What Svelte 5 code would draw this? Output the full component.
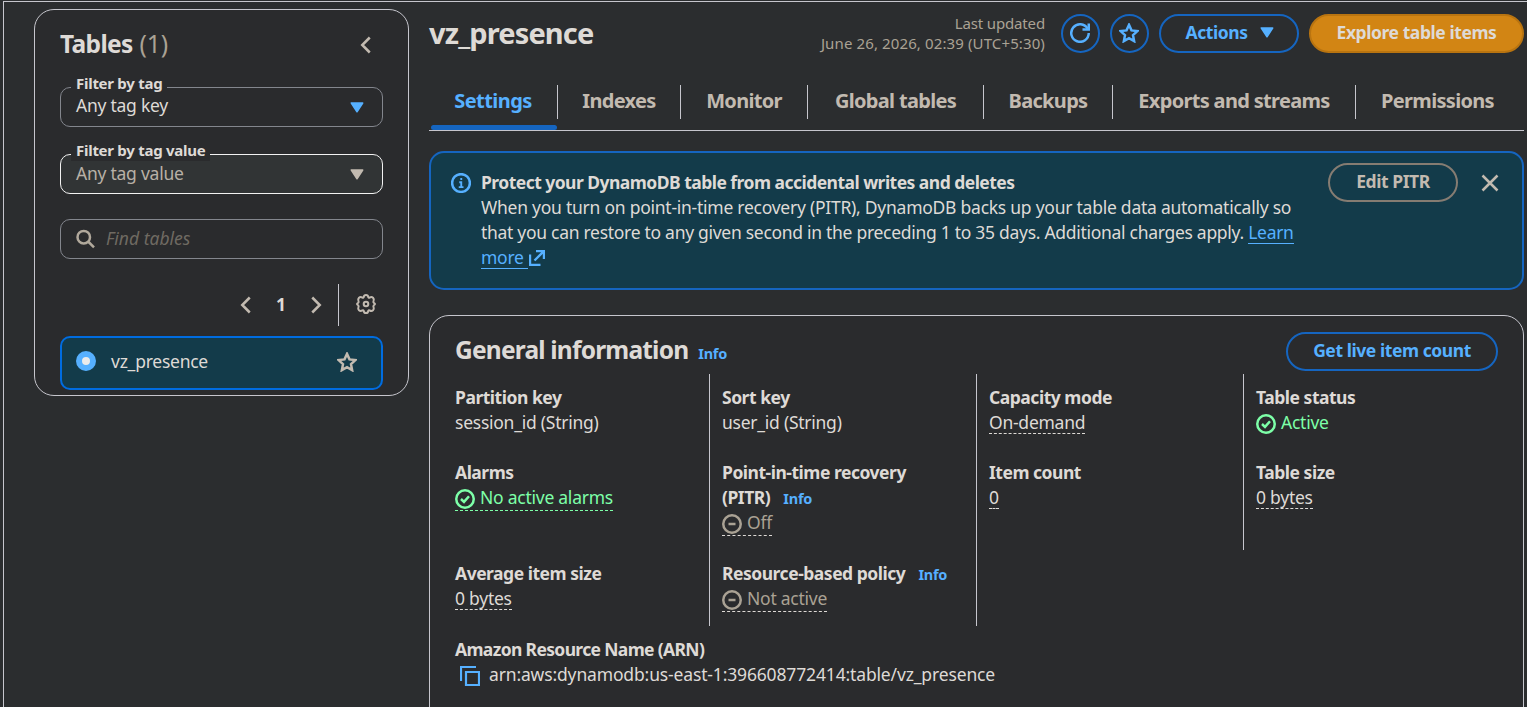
<script lang="ts">
  type Field = {
    label: string;
    value: string;
    status?: 'ok' | 'off';
    dashed?: boolean;
    info?: boolean;
  };

  const tabs = [
    { id: 'settings', name: 'Settings' },
    { id: 'indexes', name: 'Indexes' },
    { id: 'monitor', name: 'Monitor' },
    { id: 'global', name: 'Global tables' },
    { id: 'backups', name: 'Backups' },
    { id: 'exports', name: 'Exports and streams' },
    { id: 'permissions', name: 'Permissions' },
  ];

  // null keeps the column divider, undefined leaves the cell blank
  const fields: (Field | null | undefined)[] = [
    { label: 'Partition key', value: 'session_id (String)' },
    { label: 'Sort key', value: 'user_id (String)' },
    { label: 'Capacity mode', value: 'On-demand', dashed: true },
    { label: 'Table status', value: 'Active', status: 'ok' },
    { label: 'Alarms', value: 'No active alarms', status: 'ok', dashed: true },
    { label: 'Point-in-time recovery\n(PITR)', value: 'Off', status: 'off', dashed: true, info: true },
    { label: 'Item count', value: '0', dashed: true },
    { label: 'Table size', value: '0 bytes', dashed: true },
    { label: 'Average item size', value: '0 bytes', dashed: true },
    { label: 'Resource-based policy', value: 'Not active', status: 'off', dashed: true, info: true },
    null,
    undefined,
  ];

  let activeTab = $state('settings');
  let showAlert = $state(true);
</script>

{#snippet star()}
  <svg class="icon" viewBox="0 0 16 16"><path d="m8 1.500 2 4.400 4.700.6-3.500 3.200.9 4.800L8 12.100l-4.100 2.400.9-4.800L1.300 6.500 6 5.900 8 1.500Z" /></svg>
{/snippet}

{#snippet caret()}
  <svg class="caret" width="14" height="11" viewBox="0 0 14 11"><path d="M1.300 1h11.400L7 9.800Z" /></svg>
{/snippet}

{#snippet chevron(dir: string)}
  <svg class="icon" viewBox="0 0 16 16"><path d={dir === 'left' ? 'M11 2 5 8l6 6' : 'M5 2l6 6-6 6'} /></svg>
{/snippet}

<div class="page">
  <aside class="tables">
    <header class="tables-header">
      <h2>Tables <span class="counter">(1)</span></h2>
      <button class="plain" aria-label="Collapse">{@render chevron('left')}</button>
    </header>

    <div class="select">
      <span class="select-label">Filter by tag</span>
      <span class="select-value">Any tag key</span>
      {@render caret()}
    </div>
    <div class="select disabled">
      <span class="select-label">Filter by tag value</span>
      <span class="select-value">Any tag value</span>
      {@render caret()}
    </div>

    <div class="search">
      <svg class="icon" viewBox="0 0 16 16"><circle cx="6.200" cy="6.500" r="5" /><path d="m9.900 10.200 4.500 4.500" /></svg>
      <span>Find tables</span>
    </div>

    <div class="pager">
      <button class="plain" aria-label="Previous page">{@render chevron('left')}</button>
      <span class="page-number">1</span>
      <button class="plain" aria-label="Next page">{@render chevron('right')}</button>
      <span class="pager-divider"></span>
      <button class="plain" aria-label="Preferences">
        <svg class="icon gear" viewBox="0 0 20 20">
          <path d="M7.900 2.600Q8 1 10 1t2.100 1.600q.2 1.500 1.600.9 2-.9 3.300.2 1.300 1.400.6 3-.7 1.500.3 2.200 1.100.5 1.100 1.100t-1.100 1.200q-1 .7-.3 2.100.7 1.600-.6 3-1.300 1.100-3.300.2-1.400-.6-1.600.9Q12 19 10 19t-2.100-1.600q-.2-1.500-1.600-.9-2 .9-3.300-.2-1.300-1.400-.6-3 .7-1.400-.3-2.100Q1 10.600 1 10t1.100-1.100q1-.7.300-2.200-.7-1.600.6-3 1.300-1.100 3.300-.2 1.400.6 1.600-.9Z" />
          <circle cx="10" cy="10" r="2.300" />
        </svg>
      </button>
    </div>

    <div class="table-item">
      <span class="radio"></span>
      <span class="table-name">vz_presence</span>
      {@render star()}
    </div>
  </aside>

  <main>
    <header class="title-row">
      <h1>vz_presence</h1>
      <div class="updated">
        <div>Last updated</div>
        <div class="updated-time">June 26, 2026, 02:39 (UTC+5:30)</div>
      </div>
      <button class="btn round" aria-label="Refresh">
        <svg class="icon" viewBox="0 0 16 16"><path d="M10 5.200h5V.400" /><path d="M15 8a7 7 0 1 1-.9-3.400" /></svg>
      </button>
      <button class="btn round" aria-label="Favorite">{@render star()}</button>
      <button class="btn actions">Actions {@render caret()}</button>
      <button class="btn primary">Explore table items</button>
    </header>

    <nav class="tabs">
      {#each tabs as tab}
        <button class="tab" class:active={tab.id === activeTab} onclick={() => (activeTab = tab.id)}>
          <span>{tab.name}</span>
        </button>
      {/each}
    </nav>

    {#if showAlert}
      <section class="alert">
        <svg class="icon alert-icon" viewBox="0 0 16 16">
          <circle cx="8" cy="8" r="7.100" />
          <path class="thin" d="M8.200 3.900v1.700M6.600 7.400h1.600V11M6.200 11.300H10" />
        </svg>
        <div class="alert-body">
          <strong>Protect your DynamoDB table from accidental writes and deletes</strong>
          <p>
            When you turn on point-in-time recovery (PITR), DynamoDB backs up your table data automatically so<br />
            <span class="tight">that you can restore to any given second in the preceding 1 to 35 days. Additional charges apply. <a href="#pitr">Learn</a></span><br />
            <a href="#pitr">more&nbsp;</a>
            <svg class="external" viewBox="0 0 16 16"><path d="M1 4.500V15h10.500M7 1h8v8M15 1 5.500 10.500" /></svg>
          </p>
        </div>
        <button class="btn neutral">Edit PITR</button>
        <button class="plain dismiss" aria-label="Dismiss" onclick={() => (showAlert = false)}>
          <svg class="icon" viewBox="0 0 16 16"><path d="m2 2 12 12M14 2 2 14" /></svg>
        </button>
      </section>
    {/if}

    <section class="card">
      <header class="card-header">
        <h2>General information</h2>
        <span class="info">Info</span>
        <button class="btn live">Get live item count</button>
      </header>

      <div class="grid">
        {#each fields as field}
          <div class="cell" class:blank={field === undefined}>
            {#if field}
              {@const lines = field.label.split('\n')}
              {#each lines as line, i}
                <div class="label">
                  <span>{line}</span>
                  {#if field.info && i === lines.length - 1}<span class="info">Info</span>{/if}
                </div>
              {/each}
              <div class="value">
                <span class={field.status} class:dashed={field.dashed}>
                  {#if field.status}
                    <svg class="icon" viewBox="0 0 16 16">
                      <circle cx="8" cy="8" r="7" />
                      <path d={field.status === 'ok' ? 'm4.800 8 2.400 2.300 4-4.500' : 'M5.200 8h5.600'} />
                    </svg>
                  {/if}{field.value}</span>
              </div>
            {/if}
          </div>
        {/each}
      </div>

      <div class="arn">
        <div class="label">Amazon Resource Name (ARN)</div>
        <div class="arn-value">
          <svg class="copy" viewBox="0 0 20 20"><path d="M16 1H1v14M6 6h13v13H6z" /></svg>
          <span>arn:aws:dynamodb:us-east-1:396608772414:table/vz_presence</span>
        </div>
      </div>
    </section>
  </main>
</div>

<style>
  :global(body) {
    background: #2b2d2f;
  }

  .page {
    box-sizing: border-box;
    display: flex;
    align-items: flex-start;
    gap: 20px;
    width: 1524px;
    height: 706px;
    margin: 1px 0 0 3px;
    padding: 7px 3px 0 30px;
    border-top: 1px solid #c6c6cd;
    border-left: 1px solid #c6c6cd;
    overflow: hidden;
    color: #dedad6;
    font-family: 'Noto Sans', 'Open Sans', sans-serif;
    font-size: 17.5px;
    line-height: 25px;
    letter-spacing: -0.25px;
    white-space: nowrap;
  }

  h1,
  h2,
  p {
    margin: 0;
  }

  button {
    padding: 0;
    border: none;
    background: none;
    color: inherit;
    font: inherit;
    letter-spacing: inherit;
    cursor: pointer;
  }

  strong {
    letter-spacing: -0.53px;
  }

  .icon {
    flex: none;
    width: 20px;
    height: 20px;
    fill: none;
    stroke: currentColor;
    stroke-width: 2;
  }

  .thin {
    stroke-width: 1.5;
  }

  .caret {
    flex: none;
    fill: currentColor;
    stroke: currentColor;
    stroke-width: 1.5;
    stroke-linejoin: round;
  }

  .plain {
    display: flex;
    color: #c2bab0;
  }

  /* Table list */
  .tables {
    box-sizing: border-box;
    flex: none;
    width: 375px;
    height: 387px;
    padding: 20px 25px 0;
    border: 1px solid #c6c6cd;
    border-radius: 20px;
    background: #2a2b2d;
  }

  .tables-header {
    display: flex;
    align-items: center;
    justify-content: space-between;
    height: 30px;
    padding-right: 7px;
    margin-bottom: 27px;
  }

  h2 {
    padding-bottom: 2px;
    font-size: 24.5px;
    font-weight: 700;
    line-height: 30px;
    letter-spacing: -0.8px;
  }

  .tables h2 {
    letter-spacing: -0.65px;
  }

  .counter {
    margin-left: 1px;
    color: #aaa294;
    font-weight: 400;
    letter-spacing: 0;
  }

  .select,
  .search {
    box-sizing: border-box;
    position: relative;
    display: flex;
    align-items: center;
    height: 40px;
    padding: 0 18px 0 15px;
    border: 1px solid #83868d;
    border-radius: 10px;
  }

  .select {
    justify-content: space-between;
    margin-bottom: 27px;
  }

  .select .caret {
    color: #56b0ff;
  }

  .select-value {
    padding-bottom: 3px;
  }

  .select-label {
    position: absolute;
    top: -16px;
    left: 10px;
    padding: 0 5px;
    background: #2a2b2d;
    font-size: 15px;
    font-weight: 700;
    line-height: 22px;
    letter-spacing: -0.27px;
  }

  .select.disabled {
    margin-bottom: 25px;
    border-color: #f2f2f2;
    background: #313435;
    color: #b8b0a6;
  }

  .select.disabled .select-value {
    padding-bottom: 1px;
  }

  .select.disabled .caret {
    color: #c2bab0;
  }

  .select.disabled .select-label {
    color: #dedad6;
  }

  .search {
    gap: 10px;
    color: #b1a99c;
  }

  .search span {
    padding-bottom: 2px;
    color: #6f6a62;
    font-style: italic;
    letter-spacing: 0;
  }

  .pager {
    display: flex;
    align-items: center;
    justify-content: flex-end;
    height: 42px;
    padding-right: 7px;
    margin: 25px 0 10px;
  }

  .page-number {
    width: 50px;
    padding-bottom: 2px;
    font-weight: 700;
    text-align: center;
  }

  .pager-divider {
    width: 1px;
    height: 42px;
    margin: 0 17px 0 12px;
    background: #c6c6cd;
  }

  .gear {
    margin-bottom: 2px;
  }

  .table-item {
    box-sizing: border-box;
    display: flex;
    align-items: center;
    gap: 15px;
    height: 54px;
    padding: 0 24px 3px 14px;
    border: 2px solid #006ce0;
    border-radius: 10px;
    background: #133b4a;
  }

  .radio {
    box-sizing: border-box;
    width: 20px;
    height: 20px;
    margin-bottom: 1px;
    border: 6px solid #56b0ff;
    border-radius: 50%;
    background: #ebebeb;
  }

  .table-name {
    flex: 1;
  }

  .table-item .icon {
    color: #c2bab0;
  }

  /* Title and tabs */
  main {
    width: 1095px;
  }

  .title-row {
    display: flex;
    align-items: center;
    gap: 10px;
    height: 39px;
    margin-top: 5px;
  }

  h1 {
    flex: 1;
    padding-bottom: 1px;
    font-size: 29px;
    line-height: 36px;
    letter-spacing: -0.85px;
  }

  .updated {
    padding-bottom: 1px;
    margin-right: 6px;
    color: #aaa294;
    font-size: 15px;
    line-height: 20px;
    letter-spacing: -0.15px;
    text-align: right;
  }

  .updated-time {
    letter-spacing: 0.12px;
  }

  .btn {
    box-sizing: border-box;
    display: flex;
    align-items: center;
    justify-content: center;
    height: 39px;
    padding-bottom: 2px;
    border: 2px solid #1565c0;
    border-radius: 20px;
    color: #56b0ff;
    font-weight: 700;
    letter-spacing: -0.43px;
  }

  .round {
    width: 39px;
    padding: 0 1px 1px 0;
  }

  .actions {
    gap: 12px;
    width: 140px;
    padding-left: 1px;
  }

  .primary {
    width: 215px;
    border-color: #b97410;
    background: #d28514;
    color: #dedad6;
  }

  .tabs {
    display: grid;
    grid-template-columns: 129px 123px 127px 176px 129px 243px 1fr;
    height: 46px;
    margin-top: 31px;
    border-bottom: 1px solid #c6c6cd;
  }

  .tab {
    position: relative;
    height: 46px;
    color: #c2bab0;
    font-size: 20px;
    font-weight: 700;
    letter-spacing: -0.68px;
  }

  .tab span {
    display: block;
    height: 34px;
    margin-top: -11px;
    border-right: 1px solid #c6c6cd;
    line-height: 32px;
  }

  .tab:last-child span {
    padding-right: 4px;
    border-color: transparent;
  }

  .tab.active {
    color: #56b0ff;
    letter-spacing: -0.55px;
  }

  .tab.active::after {
    content: '';
    position: absolute;
    right: 1px;
    bottom: 0;
    left: 2px;
    height: 5px;
    border-radius: 3px;
    background: #1565c0;
  }

  /* Alert */
  .alert {
    box-sizing: border-box;
    display: flex;
    align-items: flex-start;
    height: 139px;
    margin: 20px 0 25px;
    padding: 10px 22px 0 20px;
    border: 2px solid #1565c0;
    border-radius: 15px;
    background: #133b4a;
  }

  .alert-icon {
    margin: 10px 10px 0 0;
    color: #56b0ff;
  }

  .alert-body {
    flex: 1;
    padding-top: 7px;
  }

  .tight {
    letter-spacing: -0.29px;
  }

  a {
    display: inline-block;
    height: 22px;
    border-bottom: 1px solid #56b0ff;
    color: #56b0ff;
    line-height: 22px;
    text-decoration: none;
  }

  .external {
    width: 16px;
    height: 16px;
    margin-left: -3px;
    fill: none;
    stroke: #56b0ff;
    stroke-width: 2.4;
    vertical-align: -2px;
  }

  .neutral {
    width: 130px;
    border-color: #857c72;
    color: #c2bab0;
  }

  .dismiss {
    margin: 10px 0 0 22px;
  }

  /* General information */
  .card {
    box-sizing: border-box;
    height: 420px;
    padding: 16px 25px 0;
    border: 1px solid #c6c6cd;
    border-radius: 20px;
    background: #2a2b2d;
  }

  .card-header {
    display: flex;
    align-items: center;
  }

  .card h2 {
    padding-bottom: 3px;
  }

  .card-header .info {
    padding-top: 3px;
    margin-left: 10px;
  }

  .info {
    margin-left: 9px;
    color: #56b0ff;
    font-size: 14.5px;
    font-weight: 700;
    letter-spacing: -0.25px;
  }

  .live {
    width: 212px;
    margin-left: auto;
  }

  .grid {
    display: grid;
    grid-template-columns: repeat(4, 267px);
    grid-template-rows: 75px 101px 76px;
    margin: 3px 0 0 -13px;
  }

  .cell {
    padding: 11px 12px 0;
    border-left: 1px solid #c6c6cd;
  }

  .cell:nth-child(4n + 1),
  .cell.blank {
    border-color: transparent;
  }

  .label {
    height: 25px;
    font-weight: 700;
    letter-spacing: -0.48px;
  }

  .value {
    height: 25px;
  }

  .value .icon {
    margin-right: 5px;
    vertical-align: -5px;
  }

  .dashed {
    display: inline-block;
    height: 22px;
    border-bottom: 1px dashed currentColor;
    line-height: 22px;
  }

  .ok,
  .off {
    display: inline-block;
    height: 25px;
    line-height: 24px;
  }

  .ok {
    color: #7dffa8;
  }

  .off {
    color: #aaa294;
    border-color: #dedad6;
  }

  .arn {
    padding-top: 11px;
  }

  .arn .label {
    letter-spacing: -0.65px;
  }

  .arn-value {
    display: flex;
    align-items: center;
    gap: 9px;
    padding-left: 5px;
    letter-spacing: -0.15px;
  }

  .copy {
    width: 20px;
    height: 20px;
    margin-top: 3px;
    fill: none;
    stroke: #56b0ff;
    stroke-width: 2.2;
  }
</style>
